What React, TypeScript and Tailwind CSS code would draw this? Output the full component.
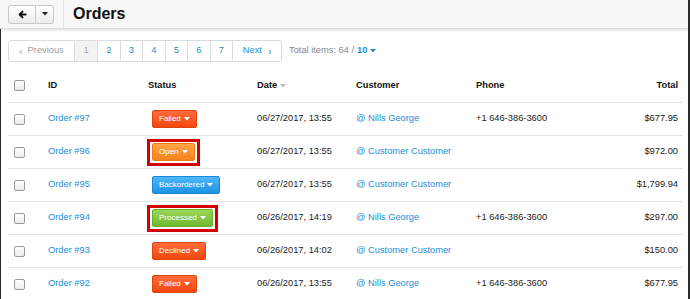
import React from "react";

type Status = "Failed" | "Open" | "Backordered" | "Processed" | "Declined";

const rows: {
  id: string;
  status: Status;
  hl?: boolean;
  date: string;
  customer: string;
  phone: string;
  total: string;
}[] = [
  { id: "Order #97", status: "Failed", date: "06/27/2017, 13:55", customer: "Nills George", phone: "+1 646-386-3600", total: "$677.95" },
  { id: "Order #96", status: "Open", hl: true, date: "06/27/2017, 13:55", customer: "Customer Customer", phone: "", total: "$972.00" },
  { id: "Order #95", status: "Backordered", date: "06/27/2017, 13:55", customer: "Customer Customer", phone: "", total: "$1,799.94" },
  { id: "Order #94", status: "Processed", hl: true, date: "06/26/2017, 14:19", customer: "Nills George", phone: "+1 646-386-3600", total: "$297.00" },
  { id: "Order #93", status: "Declined", date: "06/26/2017, 14:02", customer: "Customer Customer", phone: "", total: "$150.00" },
  { id: "Order #92", status: "Failed", date: "06/26/2017, 13:55", customer: "Nills George", phone: "+1 646-386-3600", total: "$677.95" },
];

const statusCls: Record<Status, string> = {
  Failed: "bg-gradient-to-b from-[#ff6d3a] to-[#f2460c] border-[#e0420c]",
  Declined: "bg-gradient-to-b from-[#ff6d3a] to-[#f2460c] border-[#e0420c]",
  Open: "bg-gradient-to-b from-[#ffa545] to-[#f5821c] border-[#e87a1a]",
  Backordered: "bg-gradient-to-b from-[#4cb8f7] to-[#1b92e4] border-[#1a88d6]",
  Processed: "bg-gradient-to-b from-[#9bd75c] to-[#70b92f] border-[#68ae2a]",
};

function Caret({ color = "#fff", className = "" }: { color?: string; className?: string }) {
  return (
    <svg width="6" height="4" viewBox="0 0 6 4" className={className}>
      <path d="M0 0 L6 0 L3 3.5 Z" fill={color} />
    </svg>
  );
}

function StatusBtn({ s }: { s: Status }) {
  return (
    <div
      className={`h-[18px] inline-flex items-center gap-[3px] px-[6px] rounded-[2px] border text-white text-[8px] ${statusCls[s]}`}
    >
      <span>{s}</span>
      <Caret />
    </div>
  );
}

function Checkbox() {
  return (
    <div className="w-[11px] h-[11px] rounded-[2px] border border-[#9a9a9a] bg-gradient-to-b from-white to-[#ececec]" />
  );
}

const cols = "grid grid-cols-[40px_99px_110px_99px_120px_120px_87px] items-center";

export default function App() {
  return (
    <div
      className="w-[690px] h-[299px] overflow-hidden bg-white border-r-2 border-[#2b2b2b] flex flex-col text-[#333]"
      style={{ fontFamily: '"Liberation Sans", Arial, sans-serif' }}
    >
      {/* Top bar */}
      <div className="h-[29px] shrink-0 bg-[#f7f7f7] border-b border-[#dedede] shadow-[0_2px_2px_rgba(0,0,0,0.09)] flex items-center relative z-10">
        <div className="ml-[8px] flex h-[19px]">
          <div className="w-[28px] h-full border border-[#c8c8c8] rounded-l-[3px] bg-gradient-to-b from-white to-[#ececec] flex items-center justify-center">
            <svg width="9" height="9" viewBox="0 0 10 10">
              <path d="M8.5 5 H2.5 M5 1.8 L1.8 5 L5 8.2" stroke="#111" strokeWidth="2.2" fill="none" strokeLinecap="round" strokeLinejoin="round" />
            </svg>
          </div>
          <div className="w-[18px] h-full border border-l-0 border-[#c8c8c8] rounded-r-[3px] bg-gradient-to-b from-white to-[#ececec] flex items-center justify-center">
            <Caret color="#222" />
          </div>
        </div>
        <div className="ml-[9px] w-px self-stretch bg-[#e4e4e4]" />
        <div className="ml-[9px] text-[16px] font-bold text-[#111] leading-none">Orders</div>
      </div>

      {/* Body */}
      <div className="flex-1 border-l border-b-2 border-[#2b2b2b] pl-[7px]">
        {/* Pagination */}
        <div className="mt-[11px] flex items-center h-[22px]">
          <div className="flex h-full border border-[#dcdcdc] rounded-[3px] text-[9.3px]">
            <div className="w-[66px] flex items-center justify-center gap-[5px] text-[#a0a0a0] border-r border-[#dcdcdc]">
              <span className="text-[10px]">‹</span>
              <span>Previous</span>
            </div>
            <div className="w-[23px] flex items-center justify-center text-[#a0a0a0] bg-[#f3f3f3] border-r border-[#dcdcdc]">1</div>
            {["2", "3", "4", "5", "6", "7"].map((n) => (
              <div key={n} className="w-[22.5px] flex items-center justify-center text-[#1e8ed8] border-r border-[#dcdcdc]">
                {n}
              </div>
            ))}
            <div className="w-[48px] flex items-center justify-center gap-[6px] text-[#1e8ed8]">
              <span>Next</span>
              <span className="text-[10px]">›</span>
            </div>
          </div>
          <div className="ml-[7px] text-[9.3px] text-[#888] flex items-center gap-[3px]">
            <span>Total items: 64 /</span>
            <span className="text-[#1e8ed8] font-bold">10</span>
            <Caret color="#1e8ed8" />
          </div>
        </div>

        {/* Table */}
        <div className="mt-[7px] w-[675px] text-[9.3px]">
          <div className={`${cols} h-[34px] border-b border-[#e2e2e2] font-bold text-[#111]`}>
            <div className="pl-[6px]"><Checkbox /></div>
            <div>ID</div>
            <div className="pl-[1px]">Status</div>
            <div className="flex items-center gap-[3px]">Date <Caret color="#bbb" /></div>
            <div>Customer</div>
            <div>Phone</div>
            <div className="text-right pr-[5px]">Total</div>
          </div>
          {rows.map((r) => (
            <div key={r.id} className={`${cols} h-[33px] border-b border-[#e2e2e2]`}>
              <div className="pl-[6px]"><Checkbox /></div>
              <div className="text-[#1e8ed8]">{r.id}</div>
              <div className={r.hl ? "" : "pl-[5px]"}>
                {r.hl ? (
                  <div className="inline-flex border-[3px] border-[#d40000] px-[2px] py-[1.5px]">
                    <StatusBtn s={r.status} />
                  </div>
                ) : (
                  <StatusBtn s={r.status} />
                )}
              </div>
              <div className="text-[#222]">{r.date}</div>
              <div className="text-[#1e8ed8]">@ {r.customer}</div>
              <div className="text-[#222]">{r.phone}</div>
              <div className="text-right pr-[5px] text-[#222]">{r.total}</div>
            </div>
          ))}
        </div>
      </div>
    </div>
  );
}
